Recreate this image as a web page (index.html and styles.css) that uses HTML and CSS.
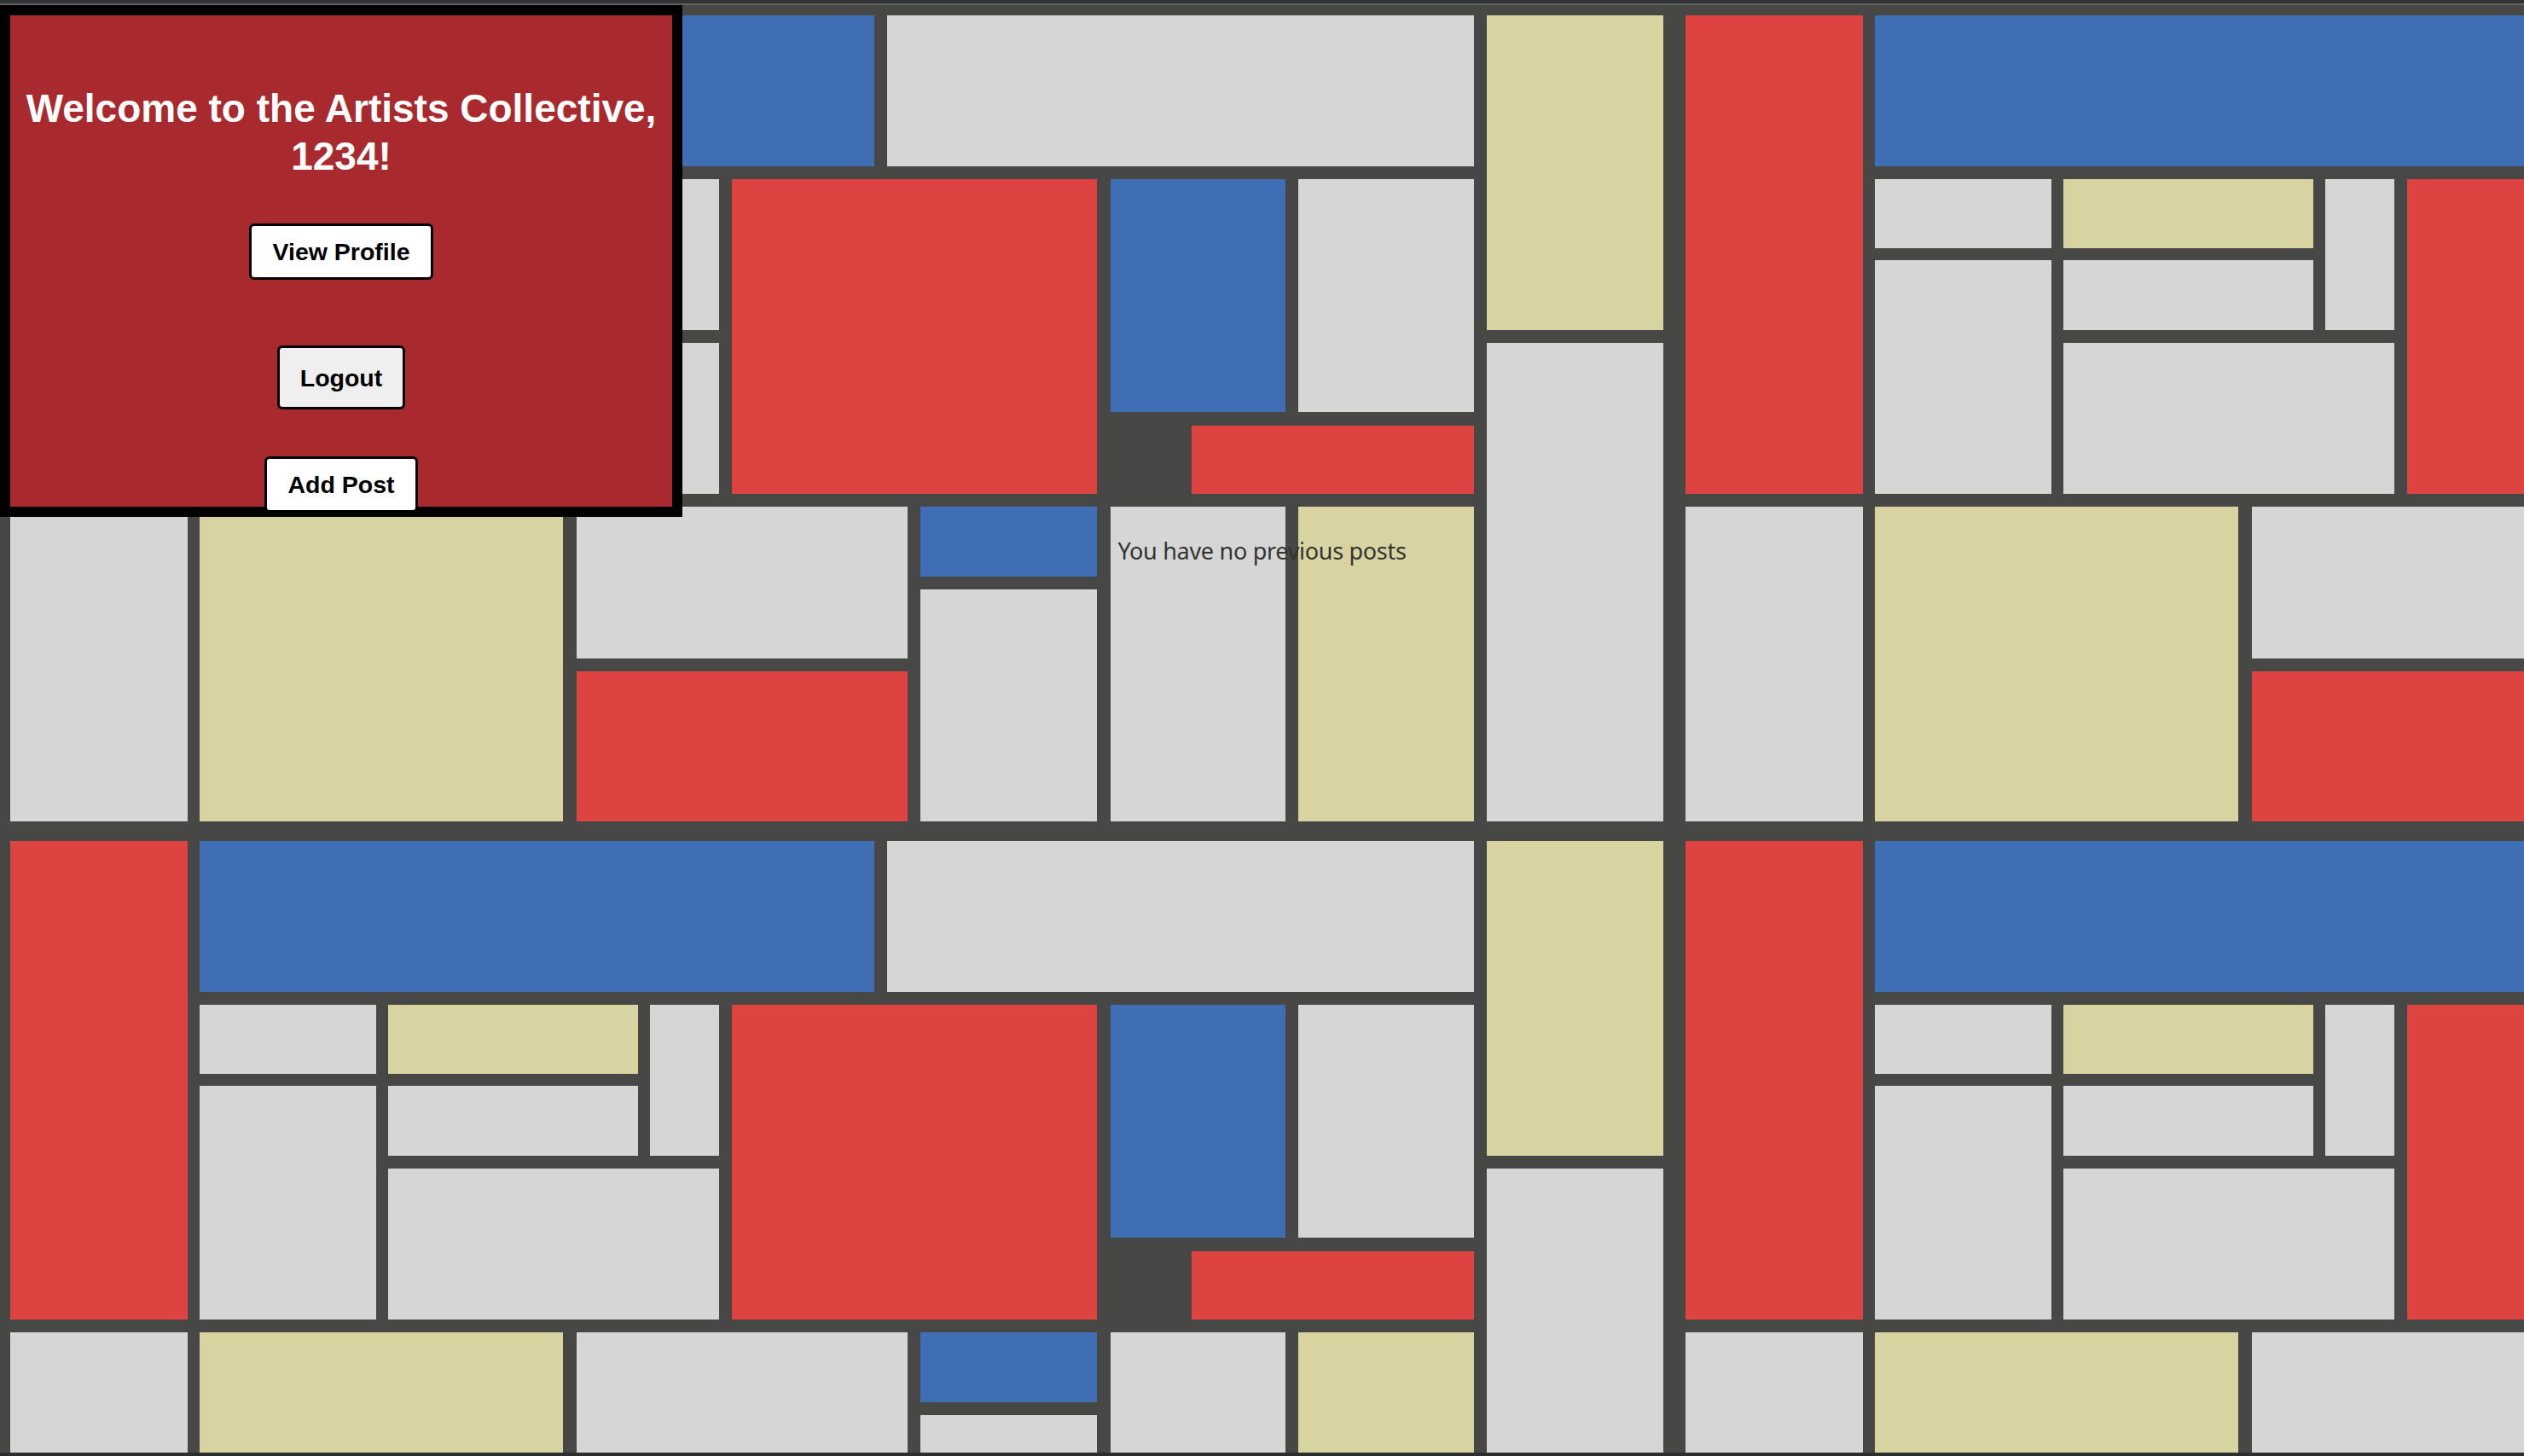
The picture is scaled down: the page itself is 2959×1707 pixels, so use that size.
FILE: index.html
```html
<!DOCTYPE html>
<html lang="en">
<head>
    <meta charset="UTF-8">
    <title>Artists Collective</title>
    <link rel="stylesheet" href="styles.css">
</head>
<body>
<div class="chrome-top"></div>
<div class="page">
    <!-- mondrian wallpaper, one tile repeated -->
    <svg class="backdrop" xmlns="http://www.w3.org/2000/svg">
        <defs>
            <pattern id="mondrian" x="0" y="0" width="1964" height="968" patternUnits="userSpaceOnUse">
                <rect class="gap" x="0" y="0" width="1964" height="968"/>
                <rect class="red" x="12" y="12" width="208" height="561"/>
                <rect class="blue" x="234" y="12" width="791" height="177"/>
                <rect class="grey" x="1040" y="12" width="688" height="177"/>
                <rect class="yellow" x="1743" y="12" width="207" height="369"/>
                <rect class="grey" x="234" y="204" width="207" height="81"/>
                <rect class="yellow" x="455" y="204" width="293" height="81"/>
                <rect class="grey" x="762" y="204" width="81" height="177"/>
                <rect class="grey" x="234" y="299" width="207" height="274"/>
                <rect class="grey" x="455" y="299" width="293" height="82"/>
                <rect class="grey" x="455" y="396" width="388" height="177"/>
                <rect class="red" x="858" y="204" width="428" height="369"/>
                <rect class="blue" x="1302" y="204" width="205" height="273"/>
                <rect class="grey" x="1522" y="204" width="206" height="273"/>
                <rect class="red" x="1397" y="493" width="331" height="80"/>
                <rect class="grey" x="1743" y="396" width="207" height="561"/>
                <rect class="grey" x="12" y="588" width="208" height="369"/>
                <rect class="yellow" x="234" y="588" width="426" height="369"/>
                <rect class="grey" x="676" y="588" width="388" height="178"/>
                <rect class="red" x="676" y="781" width="388" height="176"/>
                <rect class="blue" x="1079" y="588" width="207" height="82"/>
                <rect class="grey" x="1079" y="685" width="207" height="272"/>
                <rect class="grey" x="1302" y="588" width="205" height="369"/>
                <rect class="yellow" x="1522" y="588" width="206" height="369"/>
            </pattern>
        </defs>
        <rect x="0" y="0" width="100%" height="100%" fill="url(#mondrian)"/>
    </svg>

    <div class="content">
        <header class="welcome">
            <h1>Welcome to the Artists Collective, 1234!</h1>
            <button class="btn btn-profile">View Profile</button>
            <button class="btn btn-logout">Logout</button>
            <button class="btn btn-post">Add Post</button>
        </header>
        <p class="empty">You have no previous posts</p>
    </div>
</div>
<div class="chrome-bottom"></div>
</body>
</html>
```

FILE: styles.css
```css
*{margin: 0; padding: 0;}
html,body{
    height: 100%;
}
body{
    background-color: #474745;
    font-family: "Liberation Sans", Arial, sans-serif;
    overflow: hidden;
}
.chrome-top{
    height: 4px;
    background-color: #313234;
    border-bottom: 2px solid #626262;
}
.chrome-bottom{
    height: 4px;
    background-color: #2c2d2f;
}
.page{
    display: grid;
    height: 1697px;
    overflow: hidden;
}
.backdrop,
.content{
    grid-area: 1 / 1;
}
.backdrop{
    width: 100%;
    height: 100%;
    display: block;
}
.backdrop .gap{ fill: #474745; }
.backdrop .red{ fill: #dc4341; }
.backdrop .blue{ fill: #406eb5; }
.backdrop .yellow{ fill: #d8d4a2; }
.backdrop .grey{ fill: #d6d6d6; }

/* welcome box in the top left corner */
.welcome{
    box-sizing: border-box;
    width: 800px;
    height: 600px;
    border: 12px solid #000;
    background-color: #a82a2e;
    display: flex;
    flex-direction: column;
    align-items: center;
}
.welcome h1{
    margin-top: 81px;
    font-size: 46px;
    line-height: 56px;
    font-weight: bold;
    color: #fff;
    text-align: center;
}
.btn{
    font-family: "Liberation Sans", Arial, sans-serif;
    font-size: 28.5px;
    font-weight: bold;
    line-height: 34px;
    color: #000;
    background-color: #fff;
    border: 3px solid #000;
    border-radius: 6px;
    padding: 13px 24px;
    cursor: pointer;
}
.btn-profile{
    margin-top: 51px;
}
.btn-logout{
    margin-top: 77px;
    padding: 18px 24px 17px;
    background-color: #efefef;
}
.btn-post{
    margin-top: 55px;
}
.empty{
    margin-top: 21px;
    font-family: "Noto Sans", "Open Sans", sans-serif;
    font-size: 27px;
    line-height: 38px;
    letter-spacing: -0.3px;
    color: #333;
    text-align: center;
}
```
